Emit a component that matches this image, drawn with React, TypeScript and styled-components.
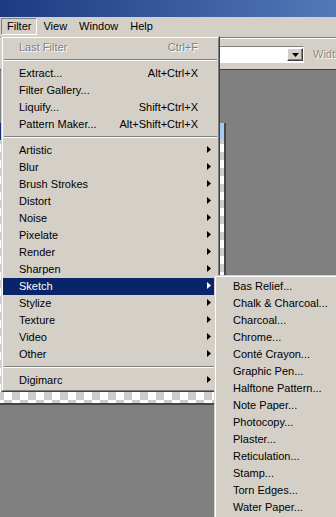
import React from 'react';
import styled, { createGlobalStyle } from 'styled-components';

const FONT = `"Liberation Sans", Arial, sans-serif`;

const Global = createGlobalStyle`
  * { box-sizing: border-box; }
  html, body {
    margin: 0;
    padding: 0;
    width: 336px;
    height: 517px;
    overflow: hidden;
    background: #808080;
  }
  #root { width: 336px; height: 517px; }
`;

const AppWindow = styled.div`
  position: relative;
  width: 336px;
  height: 517px;
  display: flex;
  flex-direction: column;
  font-family: ${FONT};
  font-size: 11px;
  color: #000;
  overflow: hidden;
`;

const TitleBar = styled.div`
  height: 17px;
  flex: none;
  background: linear-gradient(to right, #1d3a82, #5279b8);
`;

const MenuBar = styled.div`
  height: 20px;
  flex: none;
  display: flex;
  align-items: flex-start;
  padding: 1px 0 0 1px;
  background: #d4d0c8;
`;

const MenuBarItem = styled.div<{ $open?: boolean }>`
  height: 17px;
  line-height: 15px;
  padding: 0 5px;
  border: 1px solid transparent;
  border-color: ${p => (p.$open ? '#808080 #ffffff #ffffff #808080' : 'transparent')};
  white-space: nowrap;
`;

const OptionsBar = styled.div`
  height: 33px;
  flex: none;
  display: flex;
  align-items: flex-start;
  padding: 8px 0 0 120px;
  background: #d4d0c8;
  border-top: 1px solid #808080;
  border-bottom: 1px solid #404040;
  box-shadow: inset 0 1px 0 #ffffff;
  white-space: nowrap;
`;

const Combo = styled.div`
  width: 184px;
  flex: none;
  height: 17px;
  display: flex;
  justify-content: flex-end;
  padding: 1px 0;
  background: #ffffff;
  border: 1px solid;
  border-color: #808080 #ffffff #ffffff #808080;
`;

const ComboButton = styled.div`
  width: 16px;
  height: 13px;
  display: flex;
  align-items: center;
  justify-content: center;
  background: #d4d0c8;
  border: 1px solid;
  border-color: #ffffff #404040 #404040 #ffffff;
  box-shadow: inset -1px -1px 0 #808080;
`;

const WidthLabel = styled.div`
  flex: none;
  margin-left: 9px;
  line-height: 17px;
  color: #8a8a8a;
  text-shadow: 1px 1px 0 #ffffff;
  white-space: nowrap;
`;

const Workspace = styled.div`
  position: relative;
  flex: 1;
  background: #808080;
  overflow: hidden;
`;

const DocWindow = styled.div`
  position: absolute;
  left: -20px;
  top: 53px;
  width: 246px;
  height: 282px;
  display: flex;
  flex-direction: column;
  border-right: 2px solid #464646;
  border-bottom: 2px solid #464646;
`;

const DocTitle = styled.div`
  height: 17px;
  flex: none;
  background: linear-gradient(to right, #0a246a, #a6caf0);
`;

const DocCanvas = styled.div`
  flex: 1;
  background: repeating-conic-gradient(#cccccc 0 25%, #ffffff 0 50%) 0 4px / 16px 16px;
`;

const MenuFrame = styled.div`
  position: absolute;
  background: #d4d0c8;
  border: 1px solid;
  border-color: #d4d0c8 #404040 #404040 #d4d0c8;
  font-family: ${FONT};
  font-size: 11px;
`;

const FilterMenu = styled(MenuFrame)`
  left: 1px;
  top: 36px;
  width: 219px;
`;

const SketchMenu = styled(MenuFrame)`
  left: 214px;
  top: 275px;
  width: 150px;
`;

const MenuInner = styled.div<{ $padX: number }>`
  border: 1px solid;
  border-color: #ffffff #808080 #808080 #ffffff;
  padding: 1px ${p => p.$padX}px;
`;

const MenuRow = styled.div<{ $active?: boolean; $disabled?: boolean }>`
  display: grid;
  grid-template-columns: 1fr auto 20px;
  height: 17px;
  line-height: 17px;
  padding-left: 16px;
  white-space: nowrap;
  background: ${p => (p.$active ? '#0a246a' : 'transparent')};
  color: ${p => (p.$active ? '#ffffff' : p.$disabled ? '#808080' : '#000000')};
  text-shadow: ${p => (p.$disabled ? '1px 1px 0 #ffffff' : 'none')};
`;

const Shortcut = styled.span`
  text-align: right;
`;

const ArrowCell = styled.span`
  display: flex;
  justify-content: flex-end;
  align-items: flex-start;
  padding: 4px 7px 0 0;
`;

const Separator = styled.div`
  height: 0;
  margin: 3px 1px 4px;
  border-top: 1px solid #808080;
  border-bottom: 1px solid #ffffff;
`;

type Item =
  | { sep: true }
  | { label: string; shortcut?: string; sub?: boolean; disabled?: boolean; active?: boolean };

const filterItems: Item[] = [
  { label: 'Last Filter', shortcut: 'Ctrl+F', disabled: true },
  { sep: true },
  { label: 'Extract...', shortcut: 'Alt+Ctrl+X' },
  { label: 'Filter Gallery...' },
  { label: 'Liquify...', shortcut: 'Shift+Ctrl+X' },
  { label: 'Pattern Maker...', shortcut: 'Alt+Shift+Ctrl+X' },
  { sep: true },
  { label: 'Artistic', sub: true },
  { label: 'Blur', sub: true },
  { label: 'Brush Strokes', sub: true },
  { label: 'Distort', sub: true },
  { label: 'Noise', sub: true },
  { label: 'Pixelate', sub: true },
  { label: 'Render', sub: true },
  { label: 'Sharpen', sub: true },
  { label: 'Sketch', sub: true, active: true },
  { label: 'Stylize', sub: true },
  { label: 'Texture', sub: true },
  { label: 'Video', sub: true },
  { label: 'Other', sub: true },
  { sep: true },
  { label: 'Digimarc', sub: true },
];

const sketchItems: Item[] = [
  'Bas Relief...',
  'Chalk & Charcoal...',
  'Charcoal...',
  'Chrome...',
  'Conté Crayon...',
  'Graphic Pen...',
  'Halftone Pattern...',
  'Note Paper...',
  'Photocopy...',
  'Plaster...',
  'Reticulation...',
  'Stamp...',
  'Torn Edges...',
  'Water Paper...',
].map(label => ({ label }));

const SubArrow = () => (
  <svg width="4" height="7" viewBox="0 0 4 7">
    <polygon points="0,0 4,3.5 0,7" fill="currentColor" />
  </svg>
);

const DownArrow = () => (
  <svg width="7" height="4" viewBox="0 0 7 4">
    <polygon points="0,0 7,0 3.5,4" fill="#000" />
  </svg>
);

const MenuList = ({ items }: { items: Item[] }) => (
  <>
    {items.map((it, i) =>
      'sep' in it ? (
        <Separator key={i} />
      ) : (
        <MenuRow key={i} $active={it.active} $disabled={it.disabled}>
          <span>{it.label}</span>
          <Shortcut>{it.shortcut ?? ''}</Shortcut>
          <ArrowCell>{it.sub ? <SubArrow /> : null}</ArrowCell>
        </MenuRow>
      )
    )}
  </>
);

export default function App() {
  return (
    <AppWindow>
      <Global />
      <TitleBar />
      <MenuBar>
        <MenuBarItem $open>Filter</MenuBarItem>
        <MenuBarItem>View</MenuBarItem>
        <MenuBarItem>Window</MenuBarItem>
        <MenuBarItem>Help</MenuBarItem>
      </MenuBar>
      <OptionsBar>
        <Combo>
          <ComboButton>
            <DownArrow />
          </ComboButton>
        </Combo>
        <WidthLabel>Width</WidthLabel>
      </OptionsBar>
      <Workspace>
        <DocWindow>
          <DocTitle />
          <DocCanvas />
        </DocWindow>
      </Workspace>

      <FilterMenu>
        <MenuInner $padX={0}>
          <MenuList items={filterItems} />
        </MenuInner>
      </FilterMenu>

      <SketchMenu>
        <MenuInner $padX={1}>
          <MenuList items={sketchItems} />
        </MenuInner>
      </SketchMenu>
    </AppWindow>
  );
}
